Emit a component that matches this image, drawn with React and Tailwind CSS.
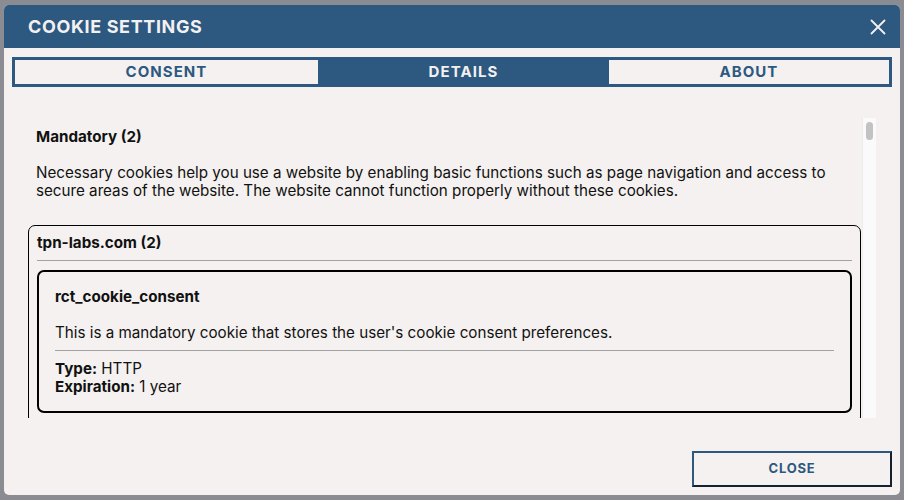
import { useState } from "react";

const tabs = ["CONSENT", "DETAILS", "ABOUT"];

function CookieCard() {
  return (
    <div className="mt-[9px] border-2 border-black rounded-[7px] px-[16px] pt-[16px] pb-[15px]">
      <div className="font-bold">rct_cookie_consent</div>
      <p className="mt-[18px]">
        This is a mandatory cookie that stores the user's cookie consent preferences.
      </p>
      <div className="mt-[8px] border-t border-[#a3a3a3]" />
      <div className="mt-[9px]">
        <span className="font-bold">Type:</span> HTTP
      </div>
      <div>
        <span className="font-bold">Expiration:</span> 1 year
      </div>
    </div>
  );
}

export default function App() {
  const [active, setActive] = useState(1);

  return (
    <div
      className="w-[904px] h-[500px] bg-[#8b8c91] pt-[5px] pl-[4px] text-[#111]"
      style={{ fontFamily: "Inter, 'Liberation Sans', sans-serif" }}
    >
      <div className="w-[896px] h-[490px] rounded-[5px] bg-[#f4f1f0] flex flex-col overflow-hidden">
        {/* header */}
        <div className="h-[43px] shrink-0 bg-[#2d5880] flex items-center justify-between pl-[24px] pr-[13px]">
          <h1 className="text-[18px] font-bold tracking-[0.035em] text-[#f3f1f0]">
            COOKIE SETTINGS
          </h1>
          <button className="w-[18px] h-[18px] flex items-center justify-center">
            <svg width="16" height="16" viewBox="0 0 16 16" stroke="#f3f1f0" strokeWidth="1.8" strokeLinecap="round">
              <path d="M1.5 1.5 L14.5 14.5 M14.5 1.5 L1.5 14.5" />
            </svg>
          </button>
        </div>

        {/* tabs */}
        <div className="mt-[9px] mx-[8px] h-[30px] shrink-0 border-[3px] border-[#2d5880] flex">
          {tabs.map((t, i) => (
            <button
              key={t}
              onClick={() => setActive(i)}
              className={`flex-auto flex items-center justify-center text-[15px] font-bold tracking-[0.07em] ${
                active === i ? "bg-[#2d5880] text-[#f3f1f0]" : "text-[#2d5880]"
              }`}
            >
              {t}
            </button>
          ))}
        </div>

        {/* content */}
        <div className="mt-[31px] h-[300px] shrink-0 flex px-[24px]">
          <div className="flex-1 overflow-hidden text-[15.2px] leading-[18px]">
            <div className="px-[8px] pt-[10px]">
              <div className="font-bold">Mandatory (2)</div>
              <p className="mt-[18px]">
                Necessary cookies help you use a website by enabling basic functions such as page
                navigation and access to secure areas of the website. The website cannot function
                properly without these cookies.
              </p>
            </div>
            <div className="mt-[25px] border border-black rounded-[7px] px-[8px] pt-[8px] pb-[10px]">
              <div className="font-bold">tpn-labs.com (2)</div>
              <div className="mt-[8px] border-t border-[#a3a3a3]" />
              <CookieCard />
            </div>
          </div>
          <div className="w-[14px] ml-[1px] bg-[#fafafa] border-l border-[#ececec] pt-[4px] flex justify-center">
            <div className="w-[7px] h-[18px] rounded-full bg-[#c2c2c2]" />
          </div>
        </div>

        {/* footer */}
        <div className="flex-1 flex items-end justify-end p-[8px]">
          <button className="w-[200px] h-[36px] border-2 border-t-[#2d5880] border-l-[#2d5880] border-r-[#15212d] border-b-[#15212d] text-[13px] font-bold tracking-[0.06em] text-[#2d5880]">
            CLOSE
          </button>
        </div>
      </div>
    </div>
  );
}
